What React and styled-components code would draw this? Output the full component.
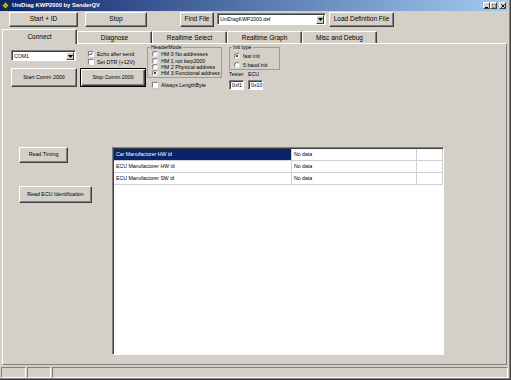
import React from 'react'
import styled, { createGlobalStyle, css } from 'styled-components'

const FONT = `"Liberation Sans", Arial, sans-serif`

const GlobalStyle = createGlobalStyle`
  html, body {
    margin: 0;
    padding: 0;
    background: #d4d0c8;
  }
  * {
    box-sizing: border-box;
  }
`

// Window frame
const Window = styled.div`
  width: 511px;
  height: 380px;
  background: #d4d0c8;
  display: flex;
  flex-direction: column;
  padding: 0 3px 2px 0;
  box-shadow: inset -1px -1px #404040, inset -2px -2px #808080;
  font-family: ${FONT};
  color: #000;
  overflow: hidden;
`

const TitleBar = styled.div`
  height: 11px;
  flex: none;
  display: flex;
  align-items: center;
  padding-left: 1px;
  background: linear-gradient(to right, #0a246a, #a6caf0);
`

const TitleText = styled.span`
  margin-left: 2px;
  color: #fff;
  font-weight: bold;
  font-size: 5.8px;
  line-height: 1;
  white-space: nowrap;
`

const TitleControls = styled.div`
  margin-left: auto;
  margin-right: 2px;
  display: flex;
  align-items: center;
`

const TitleBtn = styled.div`
  width: 7px;
  height: 7px;
  margin-left: ${p => p.$gap || 0}px;
  background: #d4d0c8;
  border: 1px solid;
  border-color: #fff #404040 #404040 #fff;
  display: flex;
  align-items: center;
  justify-content: center;
`

// Toolbar
const Toolbar = styled.div`
  height: 18px;
  flex: none;
  display: flex;
  align-items: flex-start;
  padding: 1px 0 0 9px;
`

const Btn = styled.button`
  flex: none;
  width: ${p => p.$w}px;
  height: ${p => p.$h}px;
  margin: ${p => p.$m || 0};
  padding: 0;
  background: #d4d0c8;
  font-family: ${FONT};
  font-size: ${p => p.$fs || 5.3}px;
  line-height: 1;
  color: #000;
  white-space: nowrap;
  border: 1px solid;
  border-color: #fff #404040 #404040 #fff;
  box-shadow: inset -1px -1px #808080;
  ${p =>
    p.$default &&
    css`
      border-color: #000;
      box-shadow: inset 1px 1px #fff, inset -1px -1px #404040,
        inset -2px -2px #808080;
    `}
`

const Combo = styled.div`
  flex: none;
  width: ${p => p.$w}px;
  height: ${p => p.$h}px;
  margin: ${p => p.$m || 0};
  background: #fff;
  border: 1px solid;
  border-color: #808080 #fff #fff #808080;
  box-shadow: inset 1px 1px #404040;
  display: flex;
  align-items: stretch;
  padding: 1px 1px 0 1px;
`

const ComboText = styled.div`
  flex: 1;
  font-size: 5.2px;
  line-height: ${p => p.$lh}px;
  padding-left: 1px;
  white-space: nowrap;
  overflow: hidden;
`

const ComboArrow = styled.div`
  width: 8px;
  background: #d4d0c8;
  border: 1px solid;
  border-color: #fff #404040 #404040 #fff;
  display: flex;
  align-items: center;
  justify-content: center;
`

// Tabs
const TabRow = styled.div`
  height: 14px;
  flex: none;
  display: flex;
  align-items: flex-end;
  padding-left: 2px;
`

const Tab = styled.div`
  width: 75px;
  height: ${p => (p.$active ? 15 : 12)}px;
  margin-bottom: ${p => (p.$active ? -1 : 0)}px;
  padding-top: ${p => (p.$active ? 0 : 2)}px;
  position: relative;
  z-index: ${p => (p.$active ? 1 : 0)};
  background: #d4d0c8;
  border-top: 1px solid #fff;
  border-left: 1px solid #fff;
  border-right: 1px solid #404040;
  box-shadow: inset -1px 0 #808080;
  border-radius: 1px 1px 0 0;
  display: flex;
  align-items: center;
  justify-content: center;
  font-size: 6.5px;
  line-height: 1;
  white-space: nowrap;
`

const Panel = styled.div`
  flex: 1;
  margin: 0 1px 0 2px;
  border-top: 1px solid #fff;
  border-left: 1px solid #fff;
  border-right: 1px solid #808080;
  border-bottom: 1px solid #808080;
  display: flex;
  flex-direction: column;
  font-size: 5.3px;
`

const TopArea = styled.div`
  height: 103px;
  flex: none;
  display: flex;
  align-items: flex-start;
`

const ConnCol = styled.div`
  width: 135px;
  margin: 6px 0 0 8px;
  display: flex;
  flex-direction: column;
`

const Row = styled.div`
  display: flex;
  align-items: flex-start;
  margin-top: ${p => p.$mt || 0}px;
`

const CheckList = styled.div`
  margin-left: ${p => p.$ml || 0}px;
  display: flex;
  flex-direction: column;
`

const CheckRow = styled.div`
  height: 8px;
  display: flex;
  align-items: center;
  gap: 3px;
  padding-left: ${p => p.$pl || 0}px;
  margin-top: ${p => p.$mt || 0}px;
  white-space: nowrap;
`

const CheckBox = styled.span`
  width: 6px;
  height: 6px;
  flex: none;
  background: #fff;
  border: 1px solid;
  border-color: #808080 #fff #fff #808080;
  box-shadow: 0 0 0 0.5px #c0c0c0;
  display: flex;
  align-items: center;
  justify-content: center;
`

const Radio = styled.span`
  width: 6px;
  height: 6px;
  flex: none;
  border-radius: 50%;
  background: #fff;
  border: 1px solid;
  border-color: #808080 #e8e8e8 #e8e8e8 #808080;
  display: flex;
  align-items: center;
  justify-content: center;
  &::after {
    content: '';
    width: 2px;
    height: 2px;
    border-radius: 50%;
    background: ${p => (p.$on ? '#000' : 'transparent')};
  }
`

const GroupCol = styled.div`
  width: ${p => p.$w}px;
  margin-left: ${p => p.$ml}px;
  display: flex;
  flex-direction: column;
`

const Group = styled.fieldset`
  margin: 0;
  padding: 0 0 0 2px;
  min-width: 0;
  border: 1px solid #a09c94;
`

const Legend = styled.legend`
  padding: 0 1px;
  font-size: 5.3px;
  line-height: 6px;
  white-space: nowrap;
`

const GroupItems = styled.div`
  padding: 1px 0 0 2px;
`

const RadioRow = styled.div`
  height: ${p => p.$h}px;
  display: flex;
  align-items: center;
  gap: 3px;
  white-space: nowrap;
`

const IdGrid = styled.div`
  display: grid;
  grid-template-columns: 15px 15px;
  column-gap: 4px;
  row-gap: 2px;
  margin-top: 1px;
`

const IdLabel = styled.div`
  line-height: 7px;
  white-space: nowrap;
`

const TextBox = styled.div`
  height: 10px;
  background: #fff;
  border: 1px solid;
  border-color: #808080 #fff #fff #808080;
  box-shadow: inset 1px 1px #404040;
  padding-left: 2px;
  line-height: 8px;
`

const LowerArea = styled.div`
  display: flex;
  align-items: flex-start;
`

const SideCol = styled.div`
  width: 109px;
  flex: none;
  padding-left: 16px;
  display: flex;
  flex-direction: column;
  align-items: flex-start;
`

const DataGrid = styled.div`
  width: 332px;
  height: 208px;
  background: #fff;
  border: 1px solid;
  border-color: #808080 #fff #fff #808080;
  box-shadow: inset 1px 1px #404040;
  padding: 1px 0 0 1px;
`

const GridTable = styled.div`
  display: grid;
  grid-template-columns: 178px 125px 26px;
  grid-auto-rows: 12px;
`

const Cell = styled.div`
  border-right: 1px solid #d0d0d0;
  border-bottom: 1px solid #d0d0d0;
  padding-left: 2px;
  font-size: 5.2px;
  line-height: 11px;
  white-space: nowrap;
  overflow: hidden;
  ${p =>
    p.$selected &&
    css`
      background: #0a246a;
      color: #fff;
    `}
`

// Status bar
const StatusBar = styled.div`
  height: 11px;
  flex: none;
  margin-top: 2px;
  display: flex;
  gap: 1px;
  padding-left: 1px;
`

const Pane = styled.div`
  width: ${p => (p.$w ? `${p.$w}px` : 'auto')};
  flex: ${p => (p.$w ? 'none' : 1)};
  border: 1px solid;
  border-color: #808080 #fff #fff #808080;
`

const DownTri = () => (
  <svg width='5' height='3' viewBox='0 0 5 3'>
    <polygon points='0,0 5,0 2.5,3' fill='#000' />
  </svg>
)

const Tick = () => (
  <svg width='4' height='4' viewBox='0 0 4 4'>
    <polyline points='0.4,1.8 1.5,3 3.6,0.6' fill='none' stroke='#000' strokeWidth='0.9' />
  </svg>
)

const AppIcon = () => (
  <svg width='9' height='9' viewBox='0 0 9 9'>
    <polygon points='4.5,0.3 8.7,4.5 4.5,8.7 0.3,4.5' fill='#3a3a1a' />
    <polygon points='4.5,1.8 7.2,4.5 4.5,7.2 1.8,4.5' fill='#d8d040' />
    <polygon points='4.5,3.3 5.7,4.5 4.5,5.7 3.3,4.5' fill='#4a8a30' />
  </svg>
)

const tabs = ['Connect', 'Diagnose', 'Realtime Select', 'Realtime Graph', 'Misc and Debug']

const headerModes = [
  { label: 'HM 0 No addresses', on: false },
  { label: 'HM 1 not kwp2000', on: false },
  { label: 'HM 2 Physical address', on: false },
  { label: 'HM 3 Functional address', on: true }
]

const rows = [
  ['Car Manufactorer HW id', 'No data'],
  ['ECU Manufactorer HW id', 'No data'],
  ['ECU Manufactorer SW id', 'No data']
]

export default function App () {
  return (
    <Window>
      <GlobalStyle />
      <TitleBar>
        <AppIcon />
        <TitleText>UniDiag KWP2000 by SanderQV</TitleText>
        <TitleControls>
          <TitleBtn>
            <svg width='4' height='4' viewBox='0 0 4 4'>
              <rect x='0' y='3' width='3' height='1' fill='#000' />
            </svg>
          </TitleBtn>
          <TitleBtn>
            <svg width='4' height='4' viewBox='0 0 4 4'>
              <rect x='0.5' y='0.5' width='3' height='3' fill='none' stroke='#808080' strokeWidth='0.8' />
            </svg>
          </TitleBtn>
          <TitleBtn $gap={2}>
            <svg width='4' height='4' viewBox='0 0 4 4'>
              <path d='M0.3 0.3 L3.7 3.7 M3.7 0.3 L0.3 3.7' stroke='#000' strokeWidth='0.9' />
            </svg>
          </TitleBtn>
        </TitleControls>
      </TitleBar>

      <Toolbar>
        <Btn $w={69} $h={15} $fs={6.5}>Start + ID</Btn>
        <Btn $w={62} $h={15} $fs={6.5} $m='0 0 0 7px'>Stop</Btn>
        <Btn $w={34} $h={15} $fs={6.5} $m='0 0 0 33px'>Find File</Btn>
        <Combo $w={109} $h={12} $m='1px 0 0 3px'>
          <ComboText $lh={9}>UniDiagKWP2000.def</ComboText>
          <ComboArrow><DownTri /></ComboArrow>
        </Combo>
        <Btn $w={65} $h={15} $fs={6.5} $m='0 0 0 3px'>Load Definition File</Btn>
      </Toolbar>

      <TabRow>
        {tabs.map((t, i) => (
          <Tab key={t} $active={i === 0}>{t}</Tab>
        ))}
      </TabRow>

      <Panel>
        <TopArea>
          <ConnCol>
            <Row>
              <Combo $w={65} $h={11}>
                <ComboText $lh={8}>COM1</ComboText>
                <ComboArrow><DownTri /></ComboArrow>
              </Combo>
              <CheckList $ml={12}>
                <CheckRow>
                  <CheckBox><Tick /></CheckBox>
                  Echo after send
                </CheckRow>
                <CheckRow>
                  <CheckBox />
                  Set DTR (+12V)
                </CheckRow>
              </CheckList>
            </Row>
            <Row $mt={2}>
              <Btn $w={66} $h={19}>Start Comm 2000</Btn>
              <Btn $w={66} $h={19} $m='0 0 0 3px' $default>Stop Comm 2000</Btn>
            </Row>
          </ConnCol>

          <GroupCol $w={75} $ml={1}>
            <Group>
              <Legend>HeaderMode</Legend>
              <GroupItems>
                {headerModes.map(h => (
                  <RadioRow key={h.label} $h={6.4}>
                    <Radio $on={h.on} />
                    {h.label}
                  </RadioRow>
                ))}
              </GroupItems>
            </Group>
            <CheckRow $pl={5} $mt={3}>
              <CheckBox />
              Always LengthByte
            </CheckRow>
          </GroupCol>

          <GroupCol $w={51} $ml={7}>
            <Group>
              <Legend>Init type</Legend>
              <GroupItems>
                <RadioRow $h={9}>
                  <Radio $on />
                  fast init
                </RadioRow>
                <RadioRow $h={9}>
                  <Radio />
                  5 baud init
                </RadioRow>
              </GroupItems>
            </Group>
            <IdGrid>
              <IdLabel>Tester</IdLabel>
              <IdLabel>ECU</IdLabel>
              <TextBox>0xf1</TextBox>
              <TextBox>0x10</TextBox>
            </IdGrid>
          </GroupCol>
        </TopArea>

        <LowerArea>
          <SideCol>
            <Btn $w={49} $h={16}>Read Timing</Btn>
            <Btn $w={73} $h={17} $m='23px 0 0 0'>Read ECU Identification</Btn>
          </SideCol>
          <DataGrid>
            <GridTable>
              {rows.map((r, i) => (
                <React.Fragment key={r[0]}>
                  <Cell $selected={i === 0}>{r[0]}</Cell>
                  <Cell>{r[1]}</Cell>
                  <Cell />
                </React.Fragment>
              ))}
            </GridTable>
          </DataGrid>
        </LowerArea>
      </Panel>

      <StatusBar>
        <Pane $w={25} />
        <Pane $w={24} />
        <Pane />
      </StatusBar>
    </Window>
  )
}
